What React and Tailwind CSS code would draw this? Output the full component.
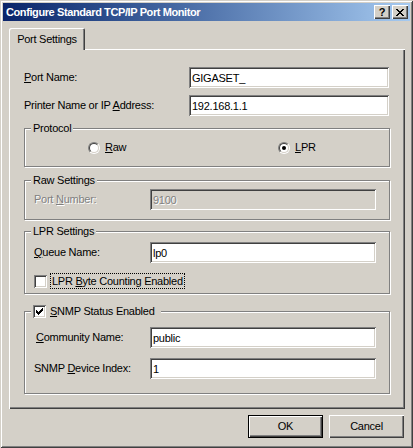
import React from 'react';

const raised = 'shadow-[inset_1px_1px_#ffffff,inset_-1px_-1px_#404040,inset_-2px_-2px_#808080]';
const sunken = 'shadow-[inset_1px_1px_#808080,inset_-1px_-1px_#ffffff,inset_2px_2px_#404040,inset_-2px_-2px_#d4d0c8]';

const closeRows = [
  [0, 2, 6, 2],
  [1, 2, 5, 2],
  [2, 4],
  [3, 2],
  [2, 4],
  [1, 2, 5, 2],
  [0, 2, 6, 2],
];

function CloseGlyph() {
  return (
    <svg width="8" height="7" viewBox="0 0 8 7" shapeRendering="crispEdges">
      {closeRows.map((r, y) => (
        <g key={y}>
          <rect x={r[0]} y={y} width={r[1]} height="1" fill="#000" />
          {r.length > 2 && <rect x={r[2]} y={y} width={r[3]} height="1" fill="#000" />}
        </g>
      ))}
    </svg>
  );
}

function CaptionButton({ children }) {
  return (
    <div className={`w-[16px] h-[14px] bg-[#d4d0c8] flex items-center justify-center ${raised}`}>
      {children}
    </div>
  );
}

function TitleBar() {
  return (
    <div className="h-[18px] flex items-center justify-between bg-gradient-to-r from-[#0a246a] to-[#a6caf0] pl-[3px] pr-[2px]">
      <span className="text-white font-bold text-[11px] leading-[13px] tracking-[-0.4px]">Configure Standard TCP/IP Port Monitor</span>
      <div className="flex gap-[2px]">
        <CaptionButton>
          <span className="font-bold text-[11px] leading-[11px] text-black pt-[1px]">?</span>
        </CaptionButton>
        <CaptionButton>
          <CloseGlyph />
        </CaptionButton>
      </div>
    </div>
  );
}

function TextBox({ value, width, disabled }) {
  return (
    <input
      readOnly
      disabled={disabled}
      defaultValue={value}
      className={`h-[21px] pl-[3px] pt-[1px] outline-none ${sunken} ${width} ${
        disabled ? 'bg-[#d4d0c8] text-[#808080] [text-shadow:1px_1px_#ffffff]' : 'bg-white text-black'
      }`}
    />
  );
}

function Radio({ checked }) {
  return (
    <div className="w-[12px] h-[12px] rounded-full border border-t-[#808080] border-l-[#808080] border-b-white border-r-white">
      <div className="w-full h-full rounded-full bg-white border border-t-[#404040] border-l-[#404040] border-b-[#d4d0c8] border-r-[#d4d0c8] flex items-center justify-center">
        {checked && <div className="w-[4px] h-[4px] rounded-full bg-black" />}
      </div>
    </div>
  );
}

function Checkbox({ checked }) {
  return (
    <div className={`w-[13px] h-[13px] bg-white shrink-0 ${sunken}`}>
      {checked && (
        <svg width="13" height="13" viewBox="0 0 13 13" shapeRendering="crispEdges">
          <polygon points="3,5 5,7 10,2 10,5 5,10 3,8" fill="#000" />
        </svg>
      )}
    </div>
  );
}

function Group({ label, className, children }) {
  return (
    <fieldset className={`border border-[#808080] shadow-[1px_1px_#ffffff,inset_1px_1px_#ffffff] min-w-0 ${className}`}>
      <legend className="ml-[6px] px-[2px] bg-[#d4d0c8] leading-[13px]">{label}</legend>
      {children}
    </fieldset>
  );
}

function Button({ label, primary }) {
  return (
    <div className={`w-[75px] h-[23px] ${primary ? 'border border-black' : ''}`}>
      <div className={`w-full h-full flex items-center justify-center ${raised}`}>{label}</div>
    </div>
  );
}

export default function App() {
  return (
    <div className="w-[413px] h-[448px] bg-[#d4d0c8] p-[3px] flex flex-col font-['Liberation_Sans',Arial,sans-serif] text-[11px] leading-[13px] tracking-[-0.25px] text-black shadow-[inset_1px_1px_#d4d0c8,inset_-1px_-1px_#404040,inset_2px_2px_#ffffff,inset_-2px_-2px_#808080]">
      <TitleBar />

      <div className="ml-[6px] mt-[7px] w-[396px] flex flex-col">
        <div className="relative z-10 -mb-[1px] w-[76px] h-[22px] bg-[#d4d0c8] rounded-tl-[2px] rounded-tr-[2px] shadow-[inset_1px_1px_#ffffff,inset_-1px_0_#404040,inset_-2px_0_#808080] flex justify-center pt-[5px]">
          Port Settings
        </div>

        <div className={`h-[360px] px-[15px] pt-[18px] flex flex-col ${raised}`}>
          <div className="flex items-center h-[21px]">
            <span className="w-[165px]"><u>P</u>ort Name:</span>
            <TextBox value="GIGASET_" width="w-[200px]" />
          </div>
          <div className="flex items-center h-[21px] mt-[7px]">
            <span className="w-[165px]">Printer Name or IP <u>A</u>ddress:</span>
            <TextBox value="192.168.1.1" width="w-[200px]" />
          </div>

          <Group label="Protocol" className="mt-[6px] h-[45px]">
            <div className="flex mt-[6px] pl-[63px]">
              <div className="w-[190px] flex items-center gap-[5px]">
                <Radio />
                <span><u>R</u>aw</span>
              </div>
              <div className="flex items-center gap-[5px]">
                <Radio checked />
                <span><u>L</u>PR</span>
              </div>
            </div>
          </Group>

          <Group label="Raw Settings" className="mt-[7px] h-[46px]">
            <div className="flex items-center mt-[2px] pl-[9px]">
              <span className="w-[116px] text-[#808080] [text-shadow:1px_1px_#ffffff]">Port <u>N</u>umber:</span>
              <TextBox value="9100" width="w-[226px]" disabled />
            </div>
          </Group>

          <Group label="LPR Settings" className="mt-[5px] h-[69px]">
            <div className="flex items-center mt-[4px] pl-[9px]">
              <span className="w-[116px]"><u>Q</u>ueue Name:</span>
              <TextBox value="lp0" width="w-[226px]" />
            </div>
            <div className="flex items-center mt-[10px] pl-[9px] gap-[3px]">
              <Checkbox />
              <span className="border border-dotted border-black px-[1px] leading-[14px]">
                LPR <u>B</u>yte Counting Enabled
              </span>
            </div>
          </Group>

          <Group
            label={
              <span className="flex items-center gap-[4px] pr-[4px]">
                <Checkbox checked />
                <span><u>S</u>NMP Status Enabled</span>
              </span>
            }
            className="mt-[11px] h-[89px]"
          >
            <div className="flex items-center mt-[9px] pl-[9px]">
              <span className="w-[116px] pl-[2px]"><u>C</u>ommunity Name:</span>
              <TextBox value="public" width="w-[226px]" />
            </div>
            <div className="flex items-center mt-[10px] pl-[9px]">
              <span className="w-[116px]">SNMP <u>D</u>evice Index:</span>
              <TextBox value="1" width="w-[226px]" />
            </div>
          </Group>
        </div>
      </div>

      <div className="mt-[6px] flex justify-end gap-[6px] pr-[6px]">
        <Button label="OK" primary />
        <Button label="Cancel" />
      </div>
    </div>
  );
}
